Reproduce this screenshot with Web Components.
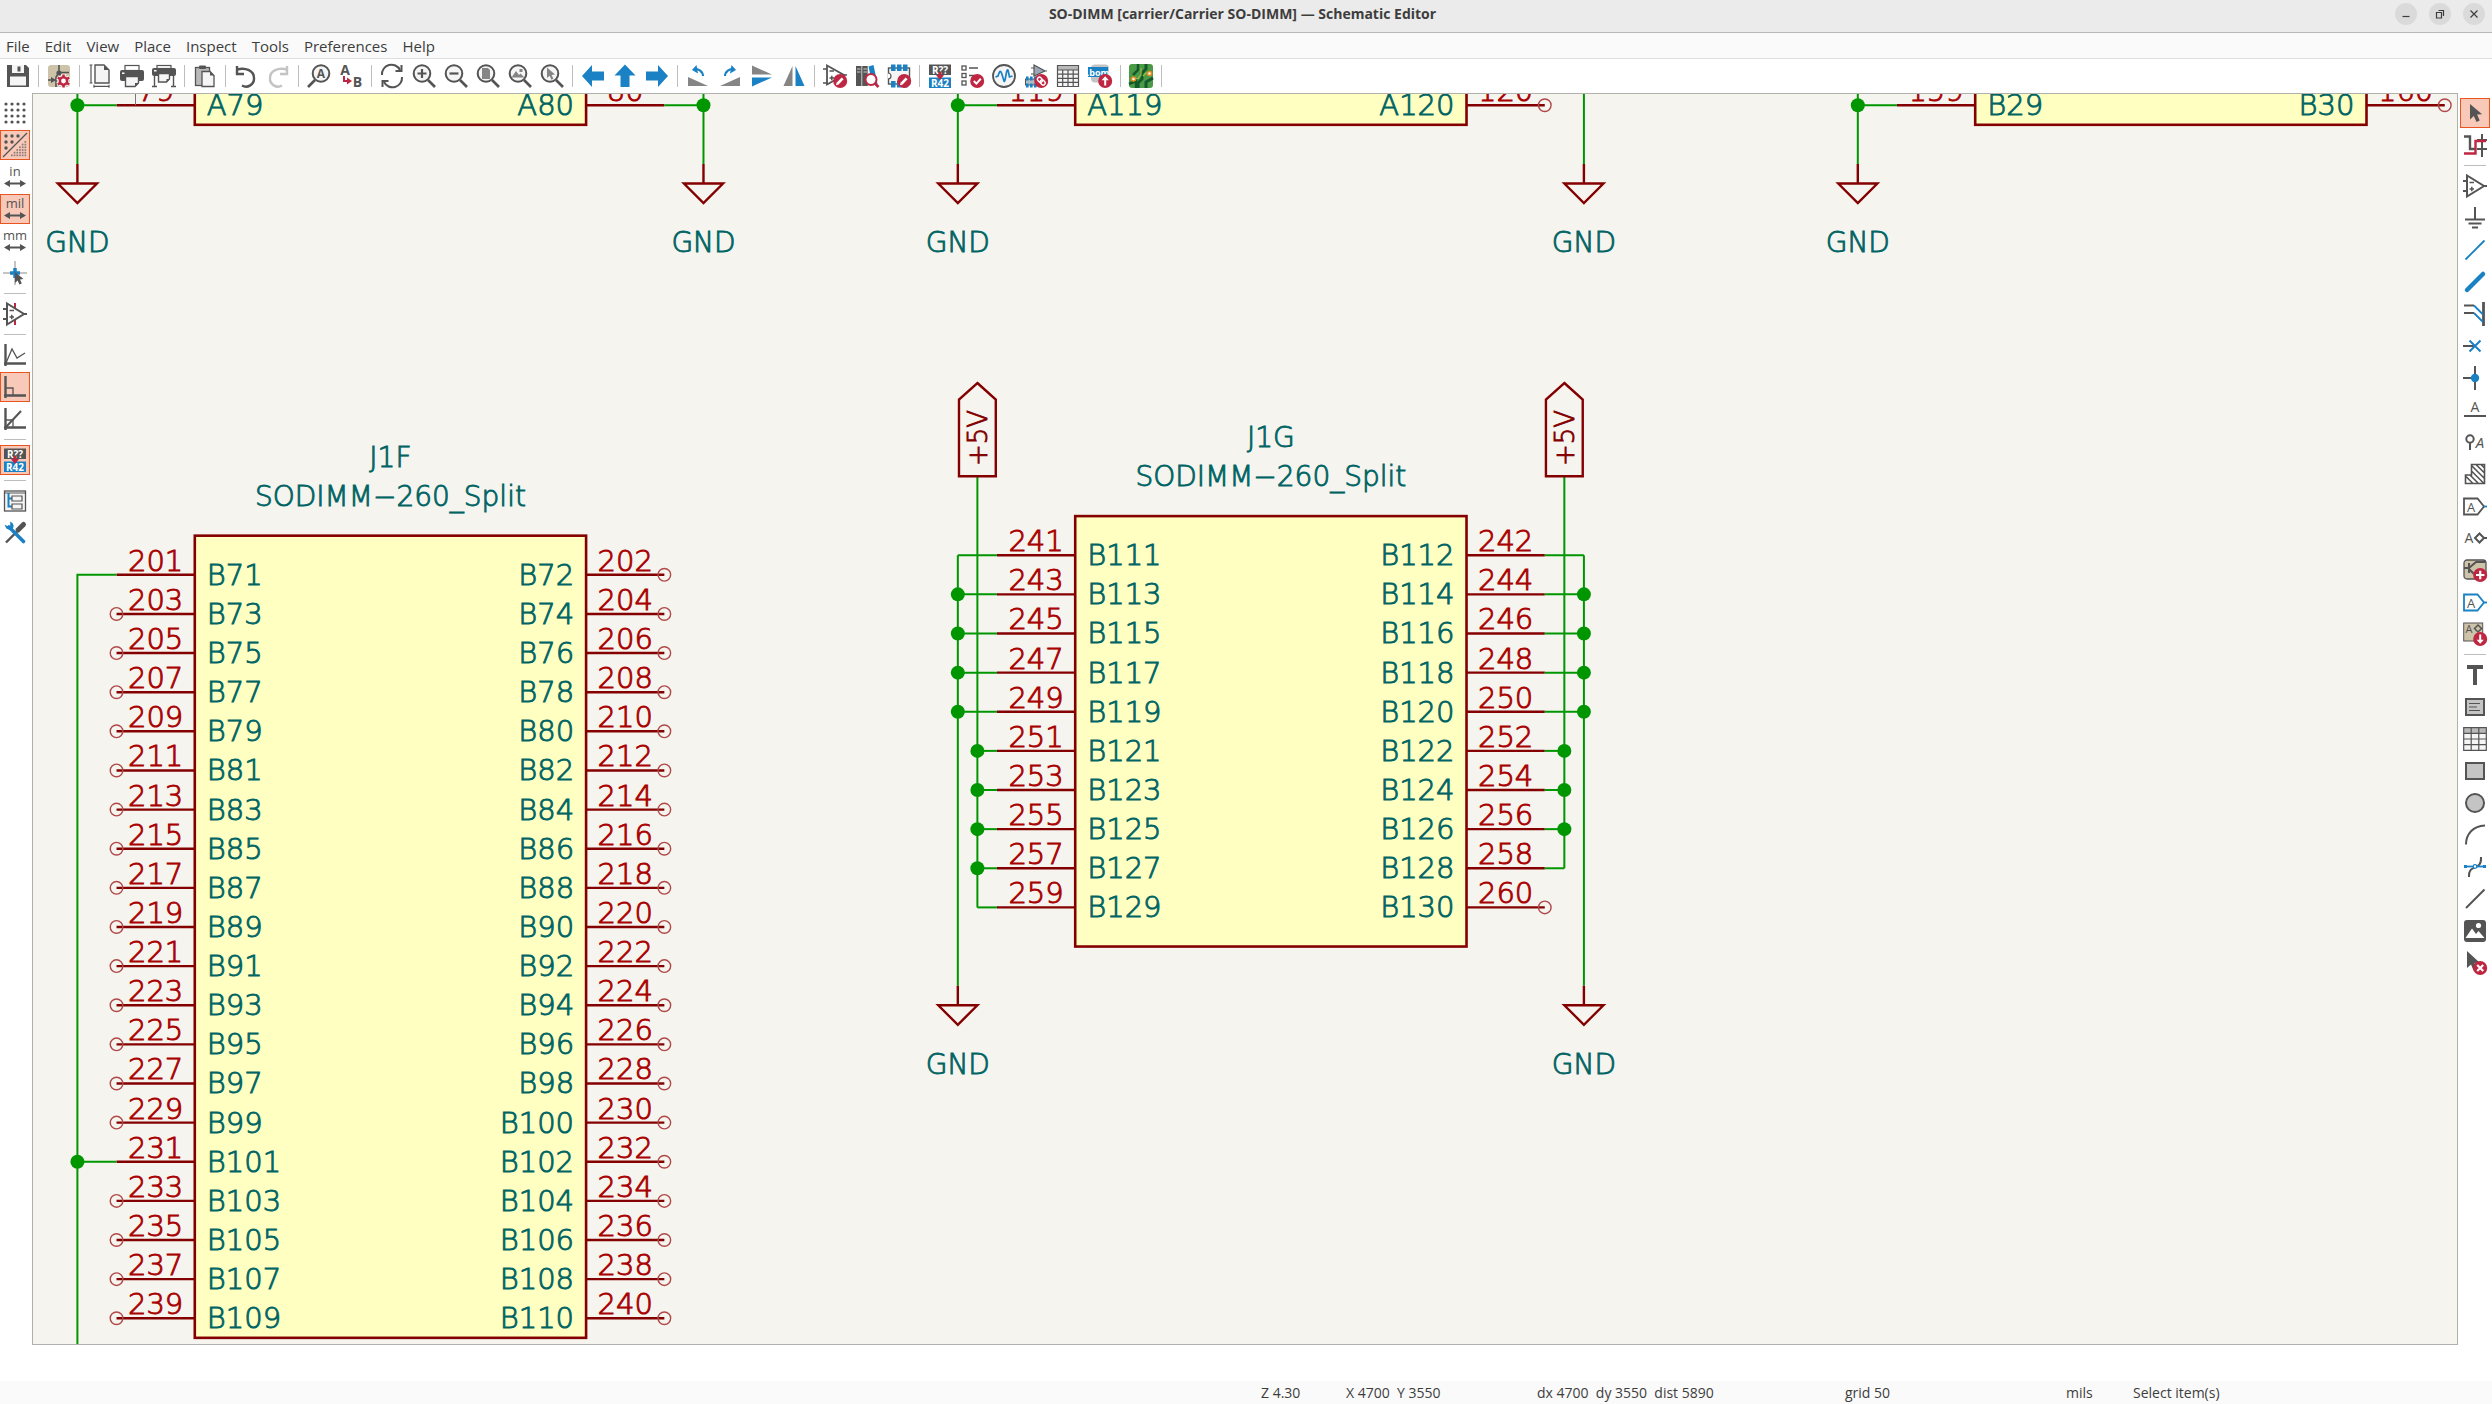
<!DOCTYPE html>
<html lang="en">
<head>
<meta charset="utf-8">
<title>SO-DIMM [carrier/Carrier SO-DIMM] — Schematic Editor</title>
<style>
html,body{margin:0;height:100%}
body{font-family:"Open Sans","Noto Sans",sans-serif;font-size:14px;color:#3d3d3d;background:#fff;overflow:hidden}
</style>
</head>
<body>
<editor-window>
  <title-bar slot="title">SO-DIMM [carrier/Carrier SO-DIMM] — Schematic Editor</title-bar>
  <menu-bar slot="menu" items="File,Edit,View,Place,Inspect,Tools,Preferences,Help"></menu-bar>
  <tool-bar slot="top" label="Main" items="save | setup | page print plot | paste | undo redo | find replace | refresh zoomin zoomout zoomfit zoomobj zoomsel | left up right | ccw cw flipv fliph | symed lib fped | annotate erc sim assign table bom | pcb |"></tool-bar>
  <tool-bar slot="left" vertical label="Options" items="grid gridov* in mil* mm cursor | opamp2 | free ninety* fortyfive | annotate* | hier tools"></tool-bar>
  <schematic-view slot="main"></schematic-view>
  <tool-bar slot="right" vertical label="Drawing" items="select* netsel | opamp power wire bus busentry noconn junction label netclass rulearea global hierlabel sheet sheetpin import | text textbox gtable rect circle arc bezier line image delete"></tool-bar>
  <status-bar slot="status"></status-bar>
</editor-window>
<script>
const define = (name, css, render) => customElements.define(name, class extends HTMLElement {
  connectedCallback() {
    if (this.shadowRoot) return;
    this.attachShadow({ mode: 'open' }).innerHTML = `<style>${css}</style>${render(this)}`;
  }
});

/* 24 x 24 icon set */
const G = '#545454', B = '#1a81c4', R = '#bf2641', L = '#b9b9b9';
const ln = (d, c = G, w = 2, x = '') => `<path d="${d}" fill="none" stroke="${c}" stroke-width="${w}" ${x}/>`;
const fl = (d, c = G) => `<path d="${d}" fill="${c}"/>`;
const rc = (x, y, w, h, c = G, e = '') => `<rect x="${x}" y="${y}" width="${w}" height="${h}" fill="${c}" ${e}/>`;
const tx = (x, y, s, t, c = G, e = 'font-weight="700"') => `<text x="${x}" y="${y}" font-size="${s}" fill="${c}" text-anchor="middle" ${e}>${t}</text>`;
const lens = ln('M16 16L23 23', G, 2.6) + `<circle cx="10" cy="9.5" r="8.3" fill="#f5f5f5" stroke="${G}" stroke-width="2"/>`;
const badge = s => `<circle cx="17.2" cy="17" r="7" fill="${R}"/>` + s;
const pencil = badge(ln('M14.6 19.6L19.6 14.4', '#fff', 2.8) + fl('M13 21.2l.6-2.8 2.2 2.2z', '#fff'));
const amp = ln('M4 1.5V22.5L21 12Z', G, 2) + ln('M0 7H4M0 17H4M20 12H24', G, 2) + ln('M6.5 8.5H11M6.5 15H11M8.8 12.8V17.2', G, 1.5);
const arrowsH = ln('M3 18.5H21', G, 2) + fl('M1 18.5l6-3.4v6.8zM23 18.5l-6-3.4v6.8z');
const axes = ln('M2.5 1V23M1 20.5H23', G, 2.4);
let dots = '', odots = '';
for (let r = 0; r < 4; r++) for (let c = 0; c < 4; c++) dots += `<circle cx="${3 + c * 6}" cy="${3 + r * 6}" r="1.6" fill="${G}"/>`;
for (let r = 0; r < 3; r++) for (let c = 0; c < 3 - r; c++) odots += `<circle cx="${3 + c * 6}" cy="${3 + r * 6}" r="1.7" fill="${G}"/>`;
for (let r = 0; r < 6; r++) for (let c = 5 - r; c < 6; c++) odots += rc(8 + c * 2.7, 8 + r * 2.7, 1.7, 1.7, '#8c7c78');

const ICONS = {
  save: fl('M1 1H20L23 4V23H1Z') + rc(6, 1, 12, 8, '#f5f5f5') + rc(11.5, 2.5, 3, 5) + rc(4, 12.5, 16, 9, '#f5f5f5'),
  setup: rc(1, 1, 22, 22, '#cdc3a9', 'rx="3"') + ln('M12 1V9L9 13V23M1 16H9M13 8.5H22', G, 1.6) + `<circle cx="12" cy="9" r="2.6" fill="${G}"/>` + fl('M4 13l5 3-5 3z') + ln('M16.5 10V24M10.5 13.5L22.5 20.5M10.5 20.5L22.5 13.5', '#fff', 4.5) + ln('M16.5 10.5V23.5M10.8 13.7L22.2 20.3M10.8 20.3L22.2 13.7', R, 2.6) + `<circle cx="16.5" cy="17" r="3.6" fill="#fff" stroke="${R}" stroke-width="2.4"/>`,
  page: fl('M7 1H16L21 6V19H7Z', '#f5f5f5') + ln('M7 1H16L21 6V19H7Z', G, 1.4) + fl('M16 1V6H21Z') + ln('M3 1V19M1.5 1H4.5M1.5 19H4.5M6 22.3H21M6 20.8V23.8M21 20.8V23.8', G, 1.2),
  print: rc(5, 1.5, 14, 5, '#fff', `stroke="${G}" stroke-width="1.2"`) + rc(0, 6, 24, 11, G, 'rx="2"') + rc(2, 8.5, 2.5, 1.5, '#fff') + fl('M5.5 12.5H18.5V19L15 22.5H5.5Z', '#f5f5f5') + ln('M5.5 12.5H18.5V19L15 22.5H5.5Z', G, 1.4) + fl('M15 22.5V19H18.5Z'),
  plot: rc(5, 1.5, 14, 3, '#fff', `stroke="${G}" stroke-width="1.2"`) + rc(0, 4, 24, 8, G, 'rx="2"') + rc(2, 6, 2.5, 1.5, '#fff') + ln('M2.5 12V22.5M21.5 12V22.5M0 22.5H5M19 22.5H24', G, 1.4) + fl('M6.5 9.5H17.5V15L14.5 18H6.5Z', '#f5f5f5') + ln('M6.5 9.5H17.5V15L14.5 18H6.5Z', G, 1.4) + fl('M14.5 18V15H17.5Z'),
  paste: rc(2.5, 3.5, 14, 18, L, `stroke="${G}" stroke-width="1.3"`) + rc(6, 1.5, 7, 3.5, G, 'rx="1"') + fl('M9 7.5H17L21 11.5V22.5H9Z', '#f5f5f5') + ln('M9 7.5H17L21 11.5V22.5H9Z', G, 1.3) + fl('M17 7.5V11.5H21Z'),
  undo: ln('M3 5.5C12 3 20 7 20 14A8 8 0 0 1 8 21.5', G, 2.4) + ln('M10 10H3V2', G, 2.4),
  redo: ln('M21 5.5C12 3 4 7 4 14A8 8 0 0 0 16 21.5', '#c4c4c4', 2.4) + ln('M14 10H21V2', '#c4c4c4', 2.4),
  find: `<g transform="matrix(-1 0 0 1 24 0)">${lens}</g>` + tx(14, 14, 12, 'A'),
  replace: tx(6, 11, 14, 'A') + tx(18.5, 23, 14, 'B') + ln('M5 12V17H9', R, 2) + fl('M8 13.5l5 3.5-5 3.5z', R),
  refresh: ln('M2 11A9.5 9.5 0 0 1 20 6M22 13A9.5 9.5 0 0 1 4 18', G, 2) + ln('M21.5 1V7H15.5M2.5 23V17H8.5', G, 2),
  zoomin: lens + ln('M5.5 9.5H14.5M10 5V14', G, 2.2),
  zoomout: lens + ln('M5.5 9.5H14.5', G, 2.2),
  zoomfit: lens + fl('M6 4H12L14 6V15H6Z', '#858585'),
  zoomobj: lens + fl('M3.5 13.5L8 7l3 4 1.5-1.5 4 4zM11.5 5h3v3h-3z', '#858585'),
  zoomsel: lens + fl('M7 3.5V14l2.6-2.3 1.8 4 2-1-1.8-3.8 3.4-.4z', '#858585'),
  left: fl('M1 12L11 1V7.5H23V16.5H11V23Z', B),
  right: fl('M23 12L13 1V7.5H1V16.5H13V23Z', B),
  up: fl('M12 0.5L1.5 11.5H7.5V23H16.5V11.5H22.5Z', B),
  ccw: fl('M2 13V22H22Z', '#858585') + ln('M17 12A7 7 0 0 0 8 5.5', B, 2.2) + fl('M10.5 1L6 6l6 3.5z', B),
  cw: fl('M22 13V22H2Z', '#858585') + ln('M7 12A7 7 0 0 1 16 5.5', B, 2.2) + fl('M13.5 1L18 6l-6 3.5z', B),
  flipv: fl('M2 1.5L22 10.5H2Z', '#858585') + fl('M2 22.5L22 13.5H2Z', B),
  fliph: fl('M1.5 22L10.5 2V22Z', '#858585') + fl('M22.5 22L13.5 2V22Z', B),
  symed: ln('M4 1.5V20.5L21 11Z', G, 1.8) + ln('M0 5H4M0 19H4M20 11H24M6.5 7H11M6.5 14H11M8.8 11.8V16.2', G, 1.5) + pencil,
  lib: rc(1, 2, 5.5, 20) + rc(7.2, 2, 5.5, 20) + fl('M13.5 2.5l5-1.5 4 19-5 1.5z', B) + ln('M2 5H5.5M8.5 5H12M2 8H5.5M8.5 8H12', '#ccc', 1) + ln('M20 19.5L23.5 23', R, 2.6) + `<circle cx="16" cy="15.5" r="5.5" fill="#fff" stroke="${R}" stroke-width="2"/>`,
  fped: rc(1.5, 4, 21, 16, '#f5f5f5', `stroke="${G}" stroke-width="1.4"`) + `<path d="M1 9a3 3 0 0 1 0 6" fill="#fff" stroke="${G}" stroke-width="1.2"/>` + [4, 10, 16].map(x => rc(x, 0.5, 4.5, 6.5, B) + rc(x, 17, 4.5, 6.5, B)).join('') + pencil,
  annotate: rc(1, 0.5, 22, 10.5) + tx(12, 9.5, 10, 'R??', '#fff') + rc(1, 13.5, 22, 10.5, B) + tx(12, 22.5, 10, 'R42', '#fff') + fl('M10.8 8h2.4v3h2.8l-4 5-4-5h2.8z', R),
  erc: [2, 9.5, 17].map(y => rc(2, y, 4, 4, '#fff', `stroke="${G}" stroke-width="1.3"`)).join('') + ln('M9 4H18M9 11.5H14', G, 1.5) + badge(ln('M13.8 17l2.6 2.6 4.4-4.8', '#fff', 2)),
  sim: `<circle cx="12" cy="12" r="11" fill="#f5f5f5" stroke="${G}" stroke-width="1.8"/>` + ln('M3.5 13L6 12C7.5 7 8.5 6 9.5 9L12 17C13.5 20 14 4 16 6L17.5 13 20.5 12', B, 1.7),
  assign: fl('M10 1V12L21 7Z', '#9ba7b5') + ln('M10 1V12L21 7ZM7 4H10M7 10H10M20 7H23', G, 1.2) + rc(1.5, 15, 12, 6, '#b0bcc6', `stroke="${G}"`) + [2, 6, 10].map(x => rc(x, 12.5, 2.6, 4, B) + rc(x, 19.5, 2.6, 4, B)).join('') + badge('<g transform="rotate(45 17.2 17)"><rect x="12.7" y="15" width="5.5" height="4" rx="2" fill="none" stroke="#fff" stroke-width="1.4"/><rect x="16.5" y="15" width="5.5" height="4" rx="2" fill="none" stroke="#fff" stroke-width="1.4"/></g>'),
  table: rc(1.5, 1.5, 21, 21, '#f5f5f5') + rc(1.5, 1.5, 21, 4.5, L) + ln('M1.5 1.5H22.5V22.5H1.5ZM1.5 6H22.5M1.5 10.2H22.5M1.5 14.3H22.5M1.5 18.4H22.5M6.7 6V22.5M12 6V22.5M17.2 6V22.5', G, 1.2),
  bom: rc(3, 0.5, 18, 18, '#c4c4c4', 'rx="4"') + rc(0, 3, 20, 10, B) + tx(10, 11.5, 9, '.bom', '#fff') + badge(ln('M17.2 21.5V14.5', '#fff', 2) + fl('M17.2 12.2l3.6 4h-7.2z', '#fff')),
  pcb: rc(0, 0, 24, 24, '#4a9a48', 'rx="3"') + ln('M9 0V6L4 11M0 20L7 17V24', '#155a2a', 2.5) + ln('M17 0V5L13 9V15L9 19V24M24 14L17 18V24', '#155a2a', 3) + ln('M4.5 14.5H9L12 11V4M20 9H17L14 12', '#9bbf4a', 1.2) + '<circle cx="4.5" cy="15" r="2" fill="#fff" stroke="#e98a1c" stroke-width="1.6"/><circle cx="20.5" cy="9.5" r="2" fill="#fff" stroke="#e98a1c" stroke-width="1.6"/>',

  grid: dots,
  gridov: odots + ln('M0 24L24 0', G, 1.2),
  in: tx(12, 11, 13, 'in', G, '') + arrowsH,
  mil: tx(12, 11, 13, 'mil', G, '') + arrowsH,
  mm: tx(12, 11, 13, 'mm', G, '') + arrowsH,
  cursor: ln('M12 0V24M0 12H24', '#8a8a8a', 1) + ln('M12 7V17M7 12H17', B, 3.5) + fl('M12 11V22l2.6-2.4 1.8 4 2.4-1-1.8-4 3.5-.6z'),
  opamp2: ln('M12 1V6M12 18V23', R, 2) + amp,
  opamp: amp,
  free: axes + ln('M3 20L9 6L14 15L22 10', G, 1.3),
  ninety: axes + ln('M3 13H10V20', G, 1.3),
  fortyfive: axes + ln('M3 20L18 4', G, 2) + ln('M3 13H10V20', G, 1.3),
  hier: rc(1.5, 2, 21, 20, '#f5f5f5', `stroke="${G}" stroke-width="1.3"`) + ln('M1.5 4H22.5', G, 1) + ln('M5.5 4V17.5H9M5.5 9.5H9', B, 2) + ln('M9 7H19V12H9ZM9 15H19V20H9Z', G, 1.2),
  tools: ln('M3 21.5L14 10.5', G, 2.4) + ln('M15 9L20.5 3.5', G, 5, 'stroke-linecap="round"') + ln('M6 6L20.5 20.5', B, 3.6, 'stroke-linecap="round"') + `<path d="M3 5.2A4 4 0 0 0 9.3 7.2 4 4 0 0 0 8 1.8V5.5L5.5 6.5Z" fill="${B}" stroke="${B}" stroke-width="1.5"/>`,

  select: fl('M7 3V18.5l3.8-3.6 2.7 6 3.2-1.4-2.6-6 5-.3z'),
  netsel: ln('M1 3.5H7V16H12', G, 2.4) + ln('M19 1V24M14 7H24M14 16H24', G, 2) + ln('M1 20.5H12.5V8H23', R, 2.4),
  power: ln('M12 1V13M2 13.5H22', G, 2) + ln('M5.5 17.5H18.5', G, 2) + ln('M9 21.5H15', G, 2),
  wire: ln('M2.5 21.5L21.5 2.5', B, 1.8),
  bus: ln('M4 20L20 4', B, 4.5, 'stroke-linecap="round"'),
  busentry: ln('M20.5 0V24', G, 2.8) + ln('M1 3.5H11M1 11H11', G, 2) + ln('M11 3.5L20 12.5M11 11L20 20', B, 1.8),
  noconn: ln('M0 12H12', G, 2) + ln('M6.5 6.5L17.5 17.5M6.5 17.5L17.5 6.5', B, 2),
  junction: ln('M12 0V24M0 12H12', G, 2) + `<circle cx="12" cy="12" r="4.2" fill="${B}"/>`,
  label: tx(12, 14, 14, 'A', G, '') + ln('M1 18H23', G, 2),
  netclass: `<circle cx="7" cy="9" r="3.7" fill="none" stroke="${G}" stroke-width="2"/>` + ln('M7 12.5V20', G, 2) + tx(17, 17.5, 15, 'A', G, 'font-style="italic"'),
  rulearea: fl('M2.5 13H8.5V2.5H21.5V21.5H2.5Z', '#fff') + ln('M2.5 13H8.5V2.5H21.5V21.5H2.5ZM3 14.5L10 21.5M7 13L15.5 21.5M8.5 9L21 21.5M8.5 3.5L21.5 16.5M13 2.5L21.5 11M18 2.5L21.5 6', G, 1.6),
  global: ln('M1 4.5H14.5L21 12.5L14.5 20.5H1Z', G, 1.8) + ln('M21 12.5H24', B, 1.8) + tx(8, 17.5, 13, 'A', G, ''),
  hierlabel: tx(6, 17, 14, 'A', G, '') + ln('M16.5 7.5L21 12L16.5 16.5L12 12ZM21 12H24', G, 2),
  sheet: rc(1, 2, 22, 19, '#cdc3a9', `rx="3" stroke="${G}" stroke-width="1.3"`) + ln('M1 10H6M6 5V15M6 10L13 4H22M6 11L11 16', G, 2) + badge(ln('M13 17H21.4M17.2 12.8V21.2', '#fff', 2.2)),
  sheetpin: ln('M1 4.5H14.5L21 12.5L14.5 20.5H1Z', B, 1.8) + ln('M21 12.5H24', B, 1.8) + tx(8, 17.5, 13, 'A', G, ''),
  import: rc(0.7, 1, 19, 18, '#cdc3a9', `stroke="${G}" stroke-width="1"`) + tx(6, 11, 11, 'A', G, '') + ln('M15 3L18.5 6.5L15 10L11.5 6.5Z', G, 1.5) + badge(ln('M17.2 12.5V19', '#fff', 2) + fl('M17.2 21.8l3.6-4h-7.2z', '#fff')),
  text: fl('M4 2H20V6H14V22H10V6H4Z'),
  textbox: rc(3, 4, 18, 16, '#c4c4c4', `stroke="${G}" stroke-width="2"`) + ln('M6 8.5H17M6 12H14M6 15.5H17', G, 1.2),
  gtable: rc(0.7, 0.7, 22.6, 22.6, '#f5f5f5') + rc(0.7, 0.7, 22.6, 5.5, L) + ln('M.7 .7H23.3V23.3H.7ZM.7 6.3H23.3M.7 12H23.3M.7 17.6H23.3M8.2 .7V23.3M15.8 .7V23.3', G, 1.2),
  rect: rc(3, 4, 18, 16, '#c4c4c4', `stroke="${G}" stroke-width="2"`),
  circle: `<circle cx="12" cy="12" r="9" fill="#c4c4c4" stroke="${G}" stroke-width="2"/>`,
  arc: ln('M3 21.5C3 11 10 3 22 2.5', G, 2),
  bezier: ln('M6 22C5 8 19 17 18 2', G, 2) + ln('M2 11.5H22', B, 1.8) + rc(1, 10, 3, 3, B) + rc(20, 10, 3, 3, B) + `<circle cx="12" cy="11.5" r="1.8" fill="#fff" stroke="${B}" stroke-width="1.2"/>`,
  line: ln('M3 21L21.5 2.5', G, 2),
  image: rc(1, 1, 22, 22, G, 'rx="3"') + '<circle cx="15.5" cy="6.5" r="2.6" fill="#fff"/>' + fl('M2.5 19L9 9.5L13 15L15.5 12L21.5 19Z', '#fff'),
  delete: fl('M4 0V17l4-3.6 2.5 6 3.5-1.5-2.5-6 5-.4z') + badge(ln('M14.2 14L20.2 20M14.2 20L20.2 14', '#fff', 2.2))
};

define('editor-window',
  `:host{display:flex;flex-direction:column;height:100vh;background:#fff}
   .mid{flex:1;display:flex;min-height:0}
   .main{flex:1;display:flex;min-width:0;border:1px solid #b0b0ad}
   .info{height:36px;flex:none}
   .side{padding-top:5px;flex:none}
   .left{width:32px}.right{width:32px;padding-left:2px}`,
  () => `<slot name="title"></slot><slot name="menu"></slot><slot name="top"></slot>
   <div class="mid"><div class="side left"><slot name="left"></slot></div><div class="main"><slot name="main"></slot></div><div class="side right"><slot name="right"></slot></div></div>
   <div class="info"></div><slot name="status"></slot>`);

define('title-bar',
  `:host{display:flex;align-items:center;height:32px;flex:none;background:#ebebeb;border-bottom:1px solid #b8b8b8;font:700 14px "Open Sans",sans-serif}
   .pad,.btns{flex:1;display:flex;justify-content:flex-end;gap:12px}
   .btns{padding-right:7px;box-sizing:border-box;margin-bottom:4px}h1{font:inherit;margin:0 0 5px}
   button{width:22px;height:22px;border:0;border-radius:50%;background:#dadada;padding:0}
   svg{display:block;margin:auto}`,
  () => {
    const b = (n, d) => `<button aria-label="${n}"><svg width="10" height="10" viewBox="0 0 10 10">${ln(d, '#3d3d3d', 1.2)}</svg></button>`;
    return `<div class="pad"></div><h1><slot></slot></h1><div class="btns">${b('Minimize', 'M1.5 7.5H8.5')}${b('Restore', 'M1.5 3.5H6.5V9H1.5ZM3.5 1.5H8.5V7')}${b('Close', 'M1.5 1.5L8.5 8.5M1.5 8.5L8.5 1.5')}</div>`;
  });

define('menu-bar',
  `:host{display:flex;height:25px;flex:none;background:#fafafa;border-bottom:1px solid #dedede;font-size:15px}
   nav{display:flex;align-items:center;gap:15px;padding-left:6px}
   button{border:0;background:none;padding:0;font:inherit;color:inherit;line-height:24px}`,
  el => `<nav>${el.getAttribute('items').split(',').map(t => `<button>${t}</button>`).join('')}</nav>`);

define('tool-button',
  `:host{display:block;flex:none;width:30px;height:30px}
   button{display:flex;align-items:center;justify-content:center;width:30px;height:30px;padding:0;border:1px solid transparent;background:none;box-sizing:border-box}
   :host([active]) button{background:#f8c9b8;border-color:#e95420}
   svg{display:block;flex:none;overflow:visible;font-family:"Open Sans",sans-serif}`,
  el => `<button aria-label="${el.getAttribute('icon')}"><svg width="24" height="24" viewBox="0 0 24 24">${ICONS[el.getAttribute('icon')]}</svg></button>`);

define('tool-bar',
  `:host{display:block;flex:none}
   div{display:flex;height:34px;align-items:center;padding-left:3px;gap:2px}
   i{width:1px;height:22px;background:#bdbdbd;margin:0 3px;flex:none}
   :host([vertical]) div{flex-direction:column;height:auto;align-items:flex-start;padding:0}
   :host([vertical]) i{width:22px;height:1px;margin:3px 4px}`,
  el => `<div role="toolbar" aria-label="${el.getAttribute('label')}">${el.getAttribute('items').split(' ').map(n => n === '|' ? '<i></i>' : `<tool-button icon="${n.replace('*', '')}"${n.endsWith('*') ? ' active' : ''}></tool-button>`).join('')}</div>`);

define('status-bar',
  `:host{display:flex;height:23px;flex:none;background:#fafafa;align-items:center;line-height:22px}
   .lead{flex:1}span{white-space:pre;flex:none}
   .z{width:85px}.xy{width:191px}.d{width:308px}.g{width:221px}.u{width:67px}.m{width:359px}`,
  () => `<span class="lead"></span><span class="z">Z 4.30</span><span class="xy">X 4700  Y 3550</span><span class="d">dx 4700  dy 3550  dist 5890</span><span class="g">grid 50</span><span class="u">mils</span><span class="m">Select item(s)</span>`);

/* Schematic sheet: U is one 100 mil grid step */
define('schematic-view',
  `:host{display:block;flex:1;min-width:0;background:#f5f4ef;overflow:hidden}
   svg{display:block;width:100%;height:100%}
   text{font-family:"DejaVu Sans Light","DejaVu Sans",sans-serif;font-weight:200;font-size:29px;stroke-width:.9px}
   .n,.f{fill:#006464;stroke:#006464}.f{font-size:28px}.p{fill:#a90000;stroke:#a90000}.v{fill:#840000;stroke:#840000;font-size:26px}
   .w{stroke:#009600;stroke-width:2;fill:none}.k{stroke:#840000;stroke-width:2.4;fill:none}
   .b{stroke:#840000;stroke-width:2.6;fill:#ffffc2}.dot{fill:#009600}.nc{fill:none;stroke:#b04848;stroke-width:1.4}
   .m{text-anchor:middle}.e{text-anchor:end}`,
  () => {
    const U = 39.13, X = n => 77.4 + n * U, Y = n => 574.8 + n * U;
    let s = '';
    const t = (x, y, c, v) => s += `<text x="${x}" y="${y}" class="${c}">${v}</text>`;
    const w = d => s += `<path class="w" d="${d}"/>`;
    const dot = (x, y) => s += `<circle class="dot" cx="${x}" cy="${y}" r="7"/>`;
    const pin = (bx, y, dir, num, name, open) => {
      const end = bx + dir * 2 * U;
      s += `<path class="k" d="M${bx} ${y}H${end}"/>`;
      if (open) s += `<circle class="nc" cx="${end}" cy="${y}" r="6.3"/>`;
      t(bx + dir * U, y - 4, 'p m', num);
      t(bx - dir * 12, y + 10, dir < 0 ? 'n' : 'n e', name);
    };
    const gnd = (x, y) => {
      s += `<path class="k" d="M${x} ${y}V${y + U / 2}M${x - U / 2} ${y + U / 2}H${x + U / 2}L${x} ${y + U}Z"/>`;
      t(x, y + 88, 'f m', 'GND');
    };
    const v5 = x => {
      s += `<path class="k" d="M${x} 383L${x + 18.4} 399.5V476.3H${x - 18.4}V399.5Z"/>`;
      s += `<text class="v m" transform="translate(${x + 10} 438) rotate(-90)">+5V</text>`;
    };
    const body = (n, y1, y2) => s += `<rect class="b" x="${X(n)}" y="${y1}" width="${10 * U}" height="${y2 - y1}"/>`;

    const yt = Y(-12);
    [[0, 79, 80, 'A79', 'A80', false], [22.5, 119, 120, 'A119', 'A120', true], [45.5, 159, 160, 'B29', 'B30', true]].forEach(([n, a, b, na, nb, open]) => {
      body(n + 3, 60, Y(-11.5));
      pin(X(n + 3), yt, -1, a, na, false);
      pin(X(n + 13), yt, 1, b, nb, open);
      w(`M${X(n + 1)} ${yt}H${X(n)}M${X(n)} 80V${Y(-10.5)}`);
      dot(X(n), yt); gnd(X(n), Y(-10.5));
    });
    w(`M${X(15)} ${yt}H${X(16)}M${X(16)} 80V${Y(-10.5)}M${X(38.5)} 80V${Y(-10.5)}`);
    dot(X(16), yt); gnd(X(16), Y(-10.5)); gnd(X(38.5), Y(-10.5));
    s += `<path d="M135.5 90V${yt}" stroke="#777"/>`;

    body(3, Y(-1), Y(19.5));
    t(X(8), 467, 'f m', 'J1F'); t(X(8), 506, 'f m', 'SODIMM−260_Split');
    for (let i = 0; i < 20; i++) {
      pin(X(3), Y(i), -1, 201 + 2 * i, 'B' + (71 + 2 * i), i !== 0 && i !== 15);
      pin(X(13), Y(i), 1, 202 + 2 * i, 'B' + (72 + 2 * i), true);
    }
    w(`M${X(1)} ${Y(0)}H${X(0)}V1500M${X(0)} ${Y(15)}H${X(1)}`); dot(X(0), Y(15));

    const H = i => Y(i - .5), l = 22.5;
    body(l + 3, H(-1), H(10));
    t(X(l + 8), 447, 'f m', 'J1G'); t(X(l + 8), 486, 'f m', 'SODIMM−260_Split');
    for (let i = 0; i < 10; i++) {
      pin(X(l + 3), H(i), -1, 241 + 2 * i, 'B' + (111 + 2 * i), false);
      pin(X(l + 13), H(i), 1, 242 + 2 * i, 'B' + (112 + 2 * i), i === 9);
      const inner = i > 4, lx = X(l + (inner ? .5 : 0)), rx = X(l + (inner ? 15.5 : 16));
      w(`M${X(l + 1)} ${H(i)}H${lx}`);
      if (i < 9) w(`M${X(l + 15)} ${H(i)}H${rx}`);
      if (i > 0 && i < 9) { dot(lx, H(i)); if (i < 8) dot(rx, H(i)); }
    }
    w(`M${X(l)} ${H(0)}V${H(11)}M${X(l + 16)} ${H(0)}V${H(11)}M${X(l + .5)} 476V${H(9)}M${X(l + 15.5)} 476V${H(8)}`);
    gnd(X(l), H(11)); gnd(X(l + 16), H(11));
    v5(X(l + .5)); v5(X(l + 15.5));
    return `<svg aria-label="Schematic sheet"><g transform="translate(-33 -94)">${s}</g></svg>`;
  });
</script>
</body>
</html>
